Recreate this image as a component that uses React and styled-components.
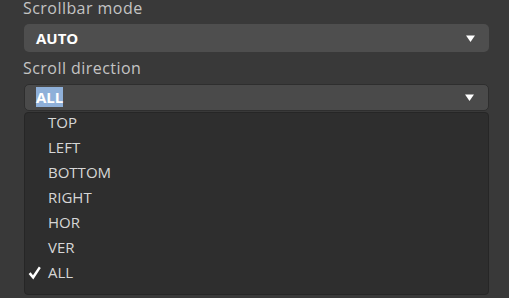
import React from "react";
import styled, { createGlobalStyle } from "styled-components";

const Global = createGlobalStyle`
  html, body { margin: 0; padding: 0; background: #393939; }
  body { font-family: "Open Sans", "Noto Sans", sans-serif; overflow: hidden; }
`;

const Panel = styled.div`
  width: 509px;
  height: 298px;
  box-sizing: border-box;
  padding: 0 20px 0 24px;
  display: flex;
  flex-direction: column;
`;

const Label = styled.div`
  font-size: 16px;
  letter-spacing: 0.45px;
  line-height: 17px;
  height: 17px;
  color: #c4c4c4;
  margin: ${(p) => p.$mt || 0}px 0 0 -1px;
  white-space: nowrap;
`;

const Select = styled.div`
  box-sizing: border-box;
  height: ${(p) => (p.$open ? 27 : 28)}px;
  margin-top: ${(p) => p.$mt}px;
  background: ${(p) => (p.$open ? "#4a4a4a" : "#4e4e4e")};
  border: ${(p) => (p.$open ? "1px solid #2e2e2e" : "none")};
  border-radius: 5px;
  display: flex;
  align-items: center;
  padding: 0 14px 0 ${(p) => (p.$open ? 11 : 12)}px;
`;

const Value = styled.span`
  flex: 1;
  font-size: 15px;
  font-weight: 700;
  color: #ffffff;
  line-height: 17px;
`;

const Selected = styled.span`
  background: #8fb0d9;
  color: #ffffff;
`;

const Arrow = styled.svg`
  width: 9px;
  height: 7px;
  display: block;
`;

const Menu = styled.div`
  box-sizing: border-box;
  margin-top: 1px;
  height: 183px;
  background: #2e2e2e;
  border: 1px solid #262626;
  border-radius: 4px;
  padding: 0 0 8px;
  display: flex;
  flex-direction: column;
`;

const Item = styled.div`
  box-sizing: border-box;
  height: 25px;
  line-height: 19px;
  padding: 0 0 6px 3px;
  font-size: 15px;
  color: #d6d6d6;
  display: flex;
  align-items: center;
`;

const CheckSlot = styled.span`
  width: 20px;
  display: flex;
  align-items: center;
  justify-content: flex-start;
`;

const Check = styled.svg`
  width: 13px;
  height: 14px;
  display: block;
  margin-top: 1px;
`;

const DownArrow = () => (
  <Arrow viewBox="0 0 9 7">
    <path d="M0 0.5 H9 L4.5 7 Z" fill="#ffffff" />
  </Arrow>
);

const items = ["TOP", "LEFT", "BOTTOM", "RIGHT", "HOR", "VER", "ALL"];

export default function App() {
  return (
    <>
      <Global />
      <Panel>
        <Label>Scrollbar mode</Label>
        <Select $mt={7}>
          <Value>AUTO</Value>
          <DownArrow />
        </Select>
        <Label $mt={8}>Scroll direction</Label>
        <Select $mt={7} $open>
          <Value>
            <Selected>ALL</Selected>
          </Value>
          <DownArrow />
        </Select>
        <Menu>
          {items.map((it) => (
            <Item key={it}>
              <CheckSlot>
                {it === "ALL" && (
                  <Check viewBox="0 0 13 14">
                    <path
                      d="M0.6 8 L2.6 6.2 L5 9.2 L10.9 0.6 L12.8 2 L5.3 13.4 Z"
                      fill="#ffffff"
                    />
                  </Check>
                )}
              </CheckSlot>
              {it}
            </Item>
          ))}
        </Menu>
      </Panel>
    </>
  );
}
